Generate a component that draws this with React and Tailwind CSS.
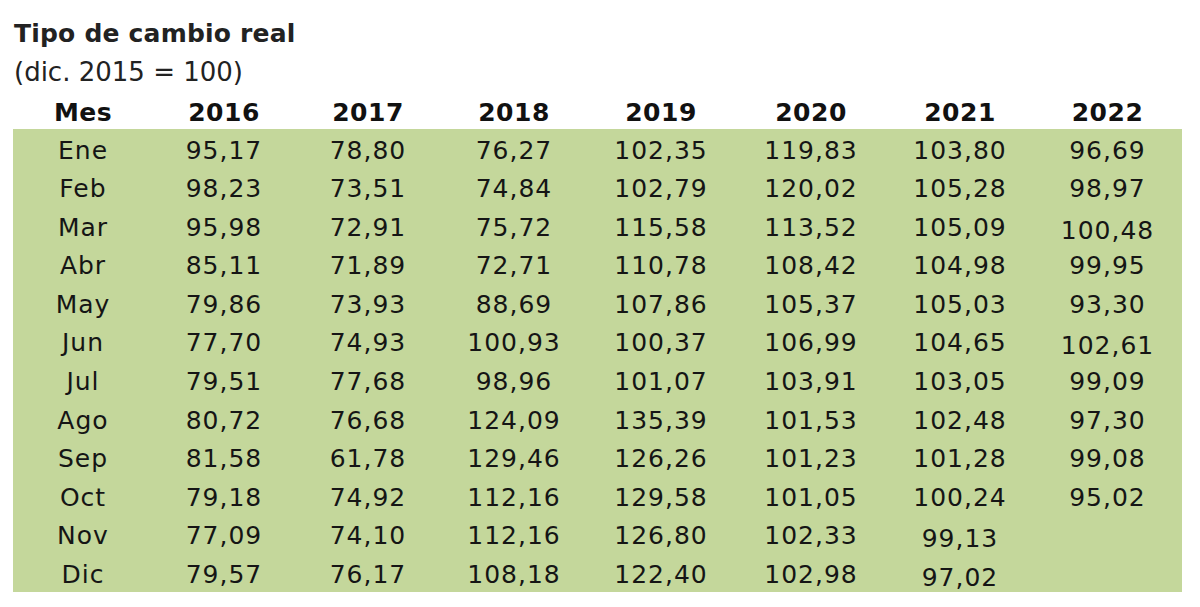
import React from "react";

const years = ["2016", "2017", "2018", "2019", "2020", "2021", "2022"];
const rows = [
  ["Ene", "95,17", "78,80", "76,27", "102,35", "119,83", "103,80", "96,69"],
  ["Feb", "98,23", "73,51", "74,84", "102,79", "120,02", "105,28", "98,97"],
  ["Mar", "95,98", "72,91", "75,72", "115,58", "113,52", "105,09", "100,48"],
  ["Abr", "85,11", "71,89", "72,71", "110,78", "108,42", "104,98", "99,95"],
  ["May", "79,86", "73,93", "88,69", "107,86", "105,37", "105,03", "93,30"],
  ["Jun", "77,70", "74,93", "100,93", "100,37", "106,99", "104,65", "102,61"],
  ["Jul", "79,51", "77,68", "98,96", "101,07", "103,91", "103,05", "99,09"],
  ["Ago", "80,72", "76,68", "124,09", "135,39", "101,53", "102,48", "97,30"],
  ["Sep", "81,58", "61,78", "129,46", "126,26", "101,23", "101,28", "99,08"],
  ["Oct", "79,18", "74,92", "112,16", "129,58", "101,05", "100,24", "95,02"],
  ["Nov", "77,09", "74,10", "112,16", "126,80", "102,33", "99,13", ""],
  ["Dic", "79,57", "76,17", "108,18", "122,40", "102,98", "97,02", ""],
];

// cells that sit slightly lower in the reference
const lowered = new Set(["2-7", "5-7", "10-6", "11-6"]);

const cols = "grid grid-cols-[140px_142px_146px_146px_148px_152px_146px_149px]";

export default function App() {
  return (
    <div
      className="w-[1200px] h-[607px] bg-white px-[13px] pt-[19px] text-[#151515]"
      style={{ fontFamily: '"DejaVu Sans", Verdana, sans-serif' }}
    >
      <div className="text-[25px] leading-[30px] font-bold tracking-[0.2px] text-[#222] pl-[1px]">
        Tipo de cambio real
      </div>
      <div className="mt-[7.5px] text-[26px] leading-[30px] text-[#222] pl-[1px]">
        (dic. 2015 = 100)
      </div>
      <div className={`${cols} h-[42.5px] items-end pb-[1px]`}>
        <div className="text-center text-[25px] leading-[30px] font-bold tracking-[0.5px] text-[#111]">Mes</div>
        {years.map((y) => (
          <div key={y} className="text-center text-[25px] leading-[30px] font-bold tracking-[0.5px] text-[#111]">
            {y}
          </div>
        ))}
      </div>
      <div className="bg-[#c4d79b] w-[1169px]">
        {rows.map((r, i) => (
          <div key={r[0]} className={`${cols} h-[38.6px]`}>
            {r.map((v, j) => (
              <div
                key={j}
                className={`flex justify-center text-[25px] leading-[30px] tracking-[1px] ${
                  lowered.has(`${i}-${j}`) ? "pt-[9.5px]" : "pt-[6.5px]"
                }`}
              >
                {v}
              </div>
            ))}
          </div>
        ))}
      </div>
    </div>
  );
}
